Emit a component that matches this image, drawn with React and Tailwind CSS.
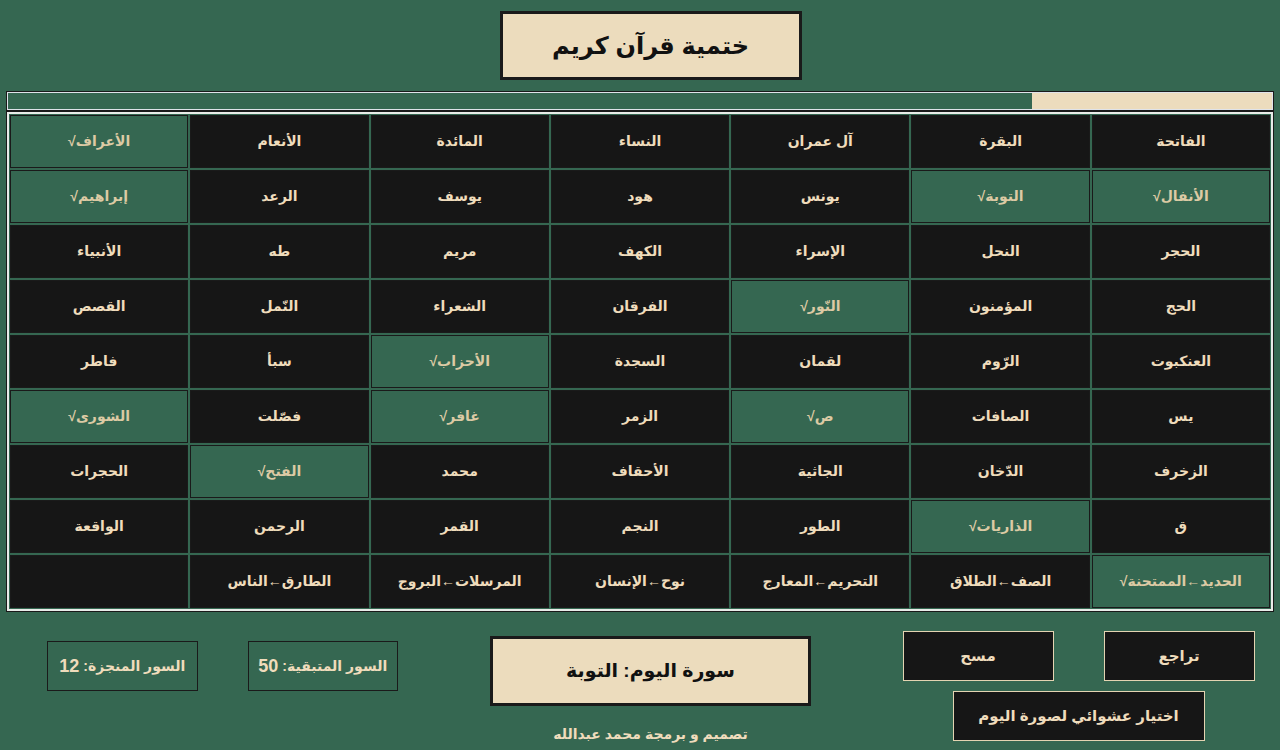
import React from "react";

const rows = [
  ["الفاتحة", "البقرة", "آل عمران", "النساء", "المائدة", "الأنعام", "الأعراف√"],
  ["الأنفال√", "التوبة√", "يونس", "هود", "يوسف", "الرعد", "إبراهيم√"],
  ["الحجر", "النحل", "الإسراء", "الكهف", "مريم", "طه", "الأنبياء"],
  ["الحج", "المؤمنون", "النّور√", "الفرقان", "الشعراء", "النّمل", "القصص"],
  ["العنكبوت", "الرّوم", "لقمان", "السجدة", "الأحزاب√", "سبأ", "فاطر"],
  ["يس", "الصافات", "ص√", "الزمر", "غافر√", "فصّلت", "الشورى√"],
  ["الزخرف", "الدّخان", "الجاثية", "الأحقاف", "محمد", "الفتح√", "الحجرات"],
  ["ق", "الذاريات√", "الطور", "النجم", "القمر", "الرحمن", "الواقعة"],
  ["الحديد←الممتحنة√", "الصف←الطلاق", "التحريم←المعارج", "نوح←الإنسان", "المرسلات←البروج", "الطارق←الناس", ""],
];

function Cell({ label }) {
  const done = label.endsWith("√");
  return (
    <div
      className={
        "flex items-center justify-center border border-[#1a1a1a] text-[14px] font-bold " +
        (done ? "bg-[#356751] text-[#dccaa4]" : "bg-[#161616] text-[#efdcbc]")
      }
    >
      {label}
    </div>
  );
}

export default function App() {
  const done = 12;
  const total = 62;

  return (
    <div
      dir="rtl"
      className="min-h-screen bg-[#356751] font-['Liberation_Sans','DejaVu_Sans',sans-serif]"
    >
      {/* title */}
      <div className="flex justify-center pt-[11px] pl-[21px]">
        <div className="w-[302px] h-[69px] border-[3px] border-[#1a1a1a] bg-[#ecdcbd] flex items-center justify-center text-[24px] font-bold text-[#111]">
          ختمية قرآن كريم
        </div>
      </div>

      <div className="mx-[6px] mt-[11px]">
        {/* progress */}
        <div className="border border-[#1a1a1a]">
          <div className="h-[18px] border border-[#dfe3ea] flex">
            <div className="h-full bg-[#ecdcbd]" style={{ width: Math.floor((done / total) * 100) + "%" }} />
          </div>
        </div>

        {/* surah grid */}
        <div className="border border-[#1a1a1a]">
          <div className="border-2 border-[#e9ece9] p-[1px] grid grid-cols-7 grid-rows-[repeat(9,53px)] gap-[2px]">
            {rows.flat().map((s, i) =>
              s ? <Cell key={i} label={s} /> : <div key={i} className="bg-[#161616] border border-[#1a1a1a]" />
            )}
          </div>
        </div>
      </div>

      {/* bottom */}
      <div className="flex justify-between pr-[26px] pl-[47px] mt-[19px] text-[#efdcbc] font-bold">
        <div className="w-[351px] flex flex-col items-center">
          <div className="flex gap-[50px]">
            <button className="w-[151px] h-[50px] bg-[#161616] border border-[#e4d4b2] text-[15px]">تراجع</button>
            <button className="w-[151px] h-[50px] bg-[#161616] border border-[#e4d4b2] text-[15px]">مسح</button>
          </div>
          <button className="mt-[10px] w-[252px] h-[50px] bg-[#161616] border border-[#e4d4b2] text-[15px]">
            اختيار عشوائي لصورة اليوم
          </button>
        </div>

        <div className="w-[321px] flex flex-col items-center pt-[5px]">
          <div className="w-full h-[70px] border-[3px] border-[#1a1a1a] bg-[#ecdcbd] flex items-center justify-center text-[19px] text-[#111]">
            سورة اليوم: التوبة
          </div>
          <div className="mt-[18px] text-[14px]">تصميم و برمجة محمد عبدالله</div>
        </div>

        <div className="w-[351px] flex gap-[50px] pt-[10px]">
          <div className="w-[151px] h-[50px] border border-[#1a1a1a] flex items-center justify-center gap-1 text-[14px]">
            السور المتبقية: <span className="text-[18px]">50</span>
          </div>
          <div className="w-[151px] h-[50px] border border-[#1a1a1a] flex items-center justify-center gap-1 text-[14px]">
            السور المنجزة: <span className="text-[18px]">12</span>
          </div>
        </div>
      </div>
    </div>
  );
}
